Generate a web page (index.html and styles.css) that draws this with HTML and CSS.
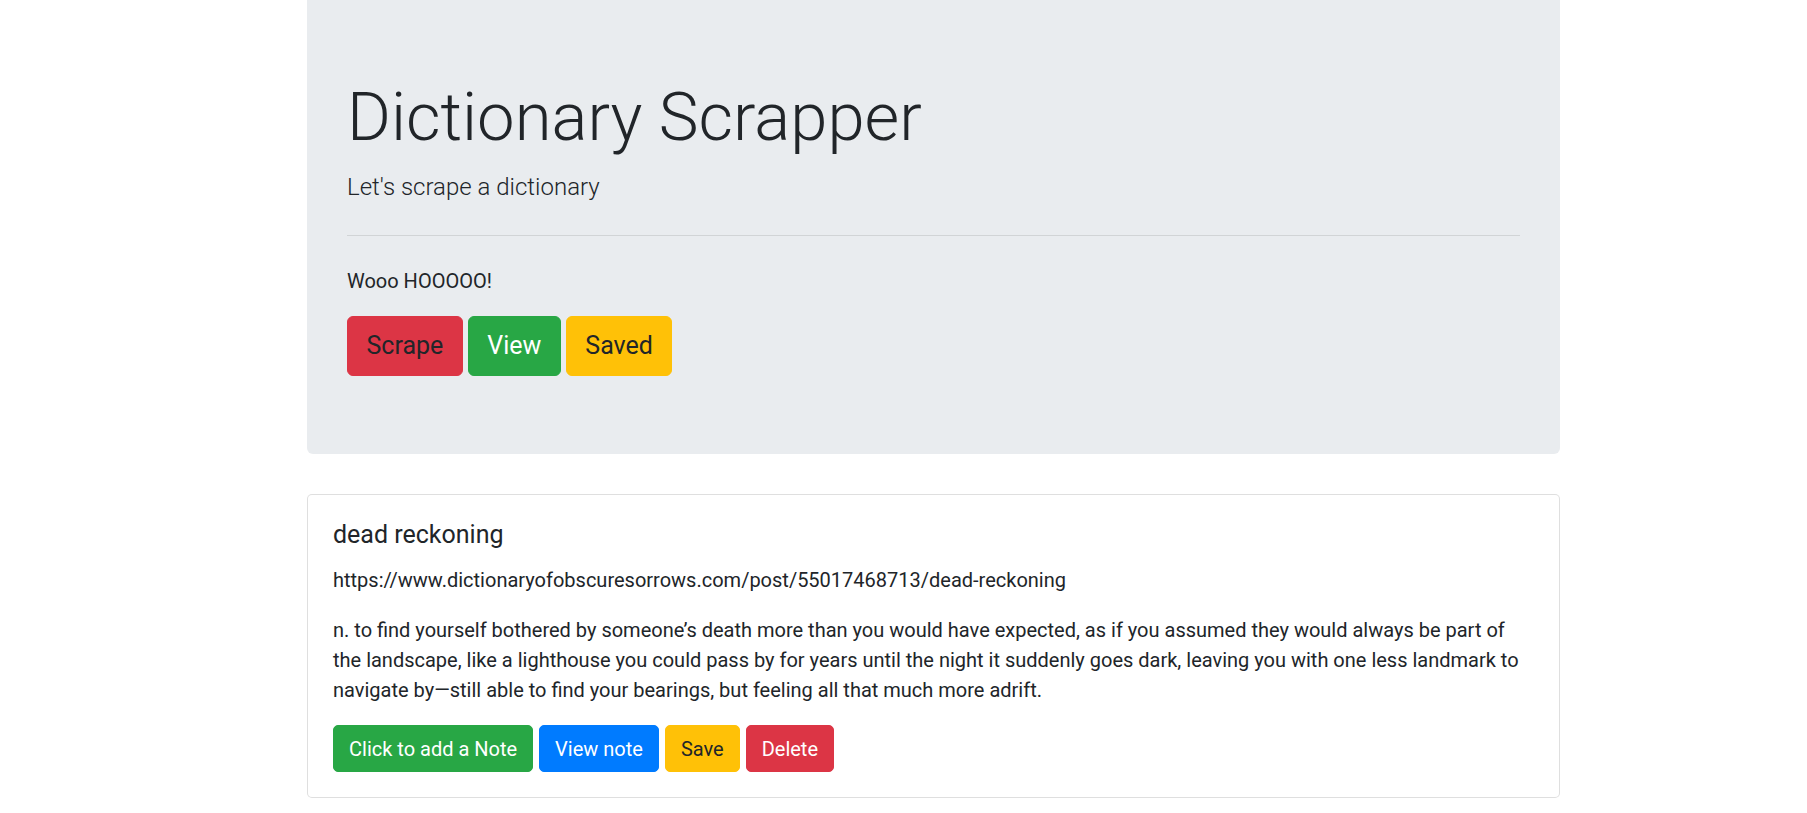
FILE: index.html
```html
<!DOCTYPE html>
<html lang="en">
<head>
<meta charset="utf-8">
<title>Dictionary Scrapper</title>
<link rel="stylesheet" href="styles.css">
</head>
<body>
<div class="page">
  <div class="jumbotron">
    <h1 class="display">Dictionary Scrapper</h1>
    <p class="lead">Let's scrape a dictionary</p>
    <hr class="divider">
    <p class="intro">Wooo HOOOOO!</p>
    <div class="btn-row">
      <a class="btn btn-lg btn-danger-dark">Scrape</a>
      <a class="btn btn-lg btn-success">View</a>
      <a class="btn btn-lg btn-warning">Saved</a>
    </div>
  </div>

  <div class="card">
    <h5 class="card-title">dead reckoning</h5>
    <p class="card-text">https://www.dictionaryofobscuresorrows.com/post/55017468713/dead-reckoning</p>
    <p class="card-text">n. to find yourself bothered by someone’s death more than you would have expected, as if you assumed they would always be part of the landscape, like a lighthouse you could pass by for years until the night it suddenly goes dark, leaving you with one less landmark to navigate by—still able to find your bearings, but feeling all that much more adrift.</p>
    <div class="btn-row small-gap">
      <a class="btn btn-success">Click to add a Note</a>
      <a class="btn btn-primary">View note</a>
      <a class="btn btn-warning">Save</a>
      <a class="btn btn-danger">Delete</a>
    </div>
  </div>
</div>
</body>
</html>
```
FILE: styles.css
```css
* { box-sizing: border-box; }
html, body { margin: 0; padding: 0; background: #fff; }
body {
  font-family: Roboto, "Liberation Sans", sans-serif;
  font-size: 20px;
  line-height: 30px;
  color: #212529;
}
.page {
  margin-left: 307px;
  width: 1253px;
}
.jumbotron {
  background: #e9ecef;
  padding: 75px 40px 78px;
  border-radius: 0 0 6px 6px;
  margin-bottom: 40px;
}
.display {
  font-size: 67px;
  font-weight: 300;
  line-height: 84px;
  margin: 0 0 10px;
}
.lead {
  font-size: 24px;
  font-weight: 300;
  line-height: 37.5px;
  margin: 0;
}
.divider {
  margin: 28px 0 30px;
  border: 0;
  border-top: 1px solid rgba(0,0,0,.1);
  height: 0;
}
.intro {
  margin: 0 0 20px;
}
.btn-row {
  display: flex;
  gap: 5px;
}
.small-gap { gap: 6px; }
.btn {
  display: inline-block;
  font-size: 20px;
  line-height: 30px;
  padding: 7.5px 15px;
  border: 1px solid transparent;
  border-radius: 5px;
  color: #fff;
  text-decoration: none;
  cursor: pointer;
}
.btn-lg {
  font-size: 25px;
  line-height: 37.5px;
  padding: 10.5px 18.5px;
  border-radius: 6px;
}
.btn-success { background: #28a745; border-color: #28a745; }
.btn-primary { background: #007bff; border-color: #007bff; }
.btn-warning { background: #ffc107; border-color: #ffc107; color: #212529; }
.btn-danger { background: #dc3545; border-color: #dc3545; }
.btn-danger-dark { background: #dc3545; border-color: #dc3545; color: #212529; }
.card {
  border: 1px solid rgba(0,0,0,.125);
  border-radius: 5px;
  padding: 25px;
  background: #fff;
}
.card-title {
  font-size: 25px;
  font-weight: 400;
  line-height: 30px;
  margin: 0 0 15px;
}
.card-text {
  margin: 0 0 20px;
}
```
